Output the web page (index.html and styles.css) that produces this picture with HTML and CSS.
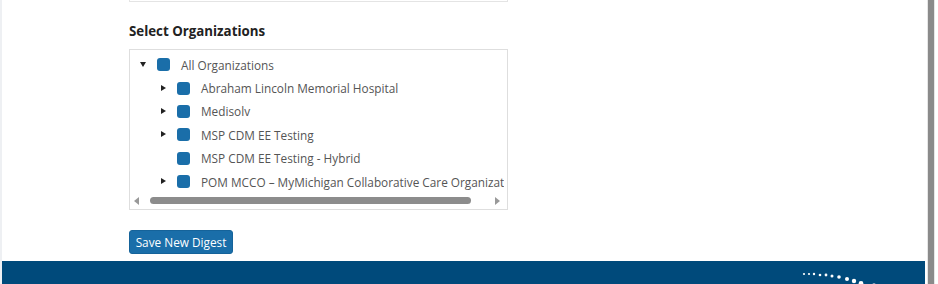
FILE: index.html
```html
<!DOCTYPE html>
<html lang="en">
<head>
    <meta charset="UTF-8">
    <meta name="viewport" content="width=device-width, initial-scale=1.0">
    <title>Save New Digest</title>
    <link rel="stylesheet" href="styles.css">
</head>
<body>
    <div class="page">
        <div class="main">
            <div class="content">
                <div class="prev-box"></div>
                <h2 class="section-title">Select Organizations</h2>
                <div class="tree-box">
                    <div class="tree-view">
                        <div class="row root">
                            <span class="toggle down"></span>
                            <span class="check"></span>
                            <span class="label">All Organizations</span>
                        </div>
                        <div class="row child">
                            <span class="toggle right"></span>
                            <span class="check"></span>
                            <span class="label">Abraham Lincoln Memorial Hospital</span>
                        </div>
                        <div class="row child">
                            <span class="toggle right"></span>
                            <span class="check"></span>
                            <span class="label">Medisolv</span>
                        </div>
                        <div class="row child">
                            <span class="toggle right"></span>
                            <span class="check"></span>
                            <span class="label">MSP CDM EE Testing</span>
                        </div>
                        <div class="row child">
                            <span class="toggle"></span>
                            <span class="check"></span>
                            <span class="label">MSP CDM EE Testing - Hybrid</span>
                        </div>
                        <div class="row child">
                            <span class="toggle right"></span>
                            <span class="check"></span>
                            <span class="label">POM MCCO – MyMichigan Collaborative Care Organization</span>
                        </div>
                    </div>
                    <div class="hscroll">
                        <span class="arrow left"></span>
                        <span class="thumb-track"><span class="thumb"></span></span>
                        <span class="arrow right"></span>
                    </div>
                </div>
                <button type="button" class="btn-save">Save New Digest</button>
            </div>
            <footer class="footer">
                <svg class="dots" width="90" height="23" viewBox="0 0 90 23">
                    <circle cx="3" cy="12" r="1.1" fill="#fff"/>
                    <circle cx="8" cy="12" r="1.1" fill="#fff"/>
                    <circle cx="13" cy="12" r="1.2" fill="#fff"/>
                    <circle cx="19" cy="13" r="1.3" fill="#fff"/>
                    <circle cx="25" cy="13" r="1.4" fill="#fff"/>
                    <circle cx="31" cy="14" r="1.5" fill="#fff"/>
                    <circle cx="38" cy="15" r="1.8" fill="#fff"/>
                    <circle cx="46" cy="17" r="2" fill="#fff"/>
                    <circle cx="53" cy="19" r="2.2" fill="#fff"/>
                    <circle cx="60" cy="21.5" r="2.4" fill="#fff"/>
                    <circle cx="73" cy="22.5" r="1.6" fill="#8fa8bf"/>
                </svg>
            </footer>
        </div>
        <div class="page-scroll"><span class="page-thumb"></span></div>
    </div>
</body>
</html>
```

FILE: styles.css
```css
html, body {
    margin: 0;
    padding: 0;
    background: #fff;
}
body {
    font-family: "Open Sans", "Noto Sans", sans-serif;
    color: #555;
    width: 938px;
    height: 284px;
    overflow: hidden;
}
.page {
    display: flex;
    height: 284px;
}
.main {
    width: 925px;
    display: flex;
    flex-direction: column;
    border-left: 2px solid #eef0f3;
    box-sizing: border-box;
}
.content {
    flex: 1;
    padding-left: 127px;
}
.prev-box {
    width: 377px;
    height: 1px;
    border: 1px solid #e4e4e4;
    border-top: none;
}
.section-title {
    margin: 20px 0 0;
    font-size: 13.3px;
    line-height: 19px;
    font-weight: 700;
    color: #222;
}
.tree-box {
    margin-top: 8px;
    width: 377px;
    border: 1px solid #dedede;
    padding: 3px 0 2px;
}
.tree-view {
    width: 374px;
    overflow: hidden;
}
.row {
    display: flex;
    align-items: center;
    height: 23.4px;
    white-space: nowrap;
    font-size: 11.8px;
}
.root {
    padding-left: 10px;
}
.child {
    padding-left: 30px;
}
.toggle {
    width: 7px;
    height: 7px;
    flex: none;
    margin-right: 10px;
    position: relative;
}
.toggle.down::before,
.toggle.right::before {
    content: "";
    position: absolute;
    width: 0;
    height: 0;
}
.toggle.down::before {
    left: 0;
    top: 1px;
    border-left: 3.5px solid transparent;
    border-right: 3.5px solid transparent;
    border-top: 5px solid #222;
}
.toggle.right::before {
    left: 1px;
    top: 0;
    border-top: 3.5px solid transparent;
    border-bottom: 3.5px solid transparent;
    border-left: 5px solid #222;
}
.check {
    width: 13px;
    height: 13px;
    flex: none;
    background: #1a6ea9;
    border-radius: 3px;
    margin-right: 11px;
}
.label {
    color: #555;
}
.hscroll {
    display: flex;
    align-items: center;
    height: 13px;
    margin-top: 1px;
    padding: 0 7px 0 4px;
}
.arrow {
    width: 0;
    height: 0;
    flex: none;
}
.arrow.left {
    border-top: 4px solid transparent;
    border-bottom: 4px solid transparent;
    border-right: 5px solid #999;
}
.arrow.right {
    border-top: 4px solid transparent;
    border-bottom: 4px solid transparent;
    border-left: 5px solid #999;
}
.thumb-track {
    flex: 1;
    padding: 0 24px 0 11px;
}
.thumb {
    display: block;
    height: 7px;
    border-radius: 4px;
    background: #8c8c8c;
}
.btn-save {
    display: block;
    margin-top: 20px;
    height: 24px;
    width: 104px;
    padding: 0;
    border: 1px solid #15639a;
    border-radius: 3px;
    background: #1a6ea9;
    color: #fff;
    font-family: "Open Sans", "Noto Sans", sans-serif;
    font-size: 11.8px;
    cursor: pointer;
}
.footer {
    height: 23px;
    background: #004a7b;
    display: flex;
    justify-content: flex-end;
    padding-right: 34px;
}
.dots {
    display: block;
    margin-top: 1px;
}
.page-scroll {
    margin-left: 2px;
    width: 6px;
    border-left: 1px solid #e6e6e6;
    border-right: 1px solid #e6e6e6;
    background: #8a8a8a;
}
```
